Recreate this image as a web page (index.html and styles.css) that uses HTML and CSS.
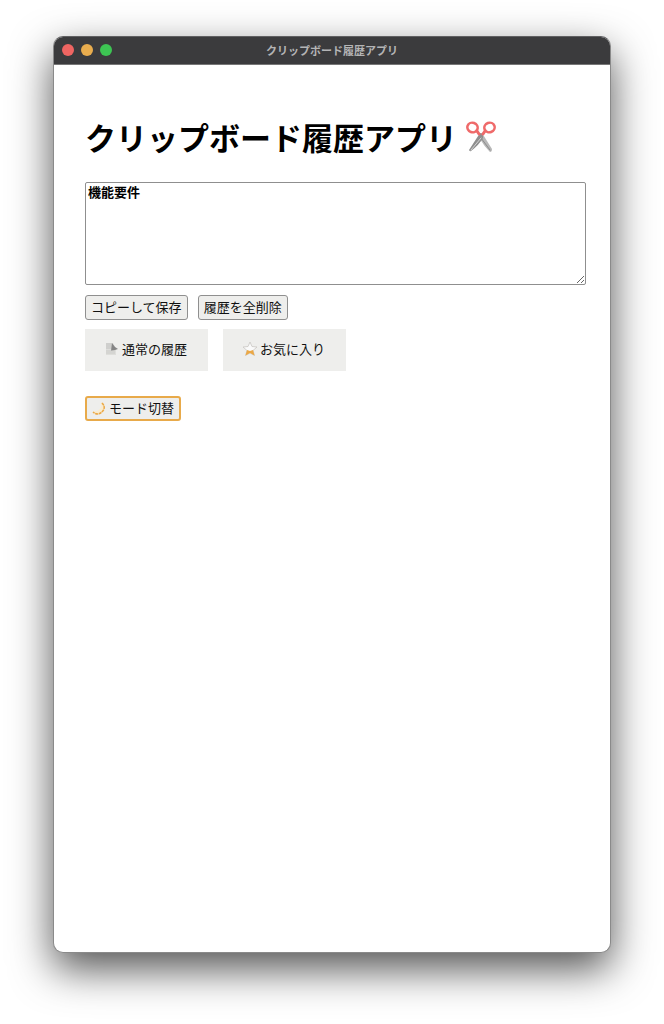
FILE: index.html
```html
<!DOCTYPE html>
<html lang="ja">
  <head>
    <meta charset="UTF-8" />
    <title>クリップボード履歴アプリ</title>
    <link rel="stylesheet" href="styles.css">
  </head>

  <body>
    <div class="window">
      <header class="titlebar">
        <div class="lights">
          <span class="light close"></span>
          <span class="light minimize"></span>
          <span class="light zoom"></span>
        </div>
        <span class="window-title">クリップボード履歴アプリ</span>
      </header>

      <main class="content">
        <h1>
          クリップボード履歴アプリ
          <svg class="scissors" viewBox="0 0 30 32" aria-hidden="true">
            <path d="M13 13 L16 12 L26 28 Q26 31 24 31 Q18 25 14 18Z" fill="#b8b8b8" />
            <path d="M24 29 L15 17" stroke="#8c8c8c" stroke-width="1" />
            <path d="M17 13 L14 12 L3 29 Q4 31 5 30 Q13 24 17 17Z" fill="#8f8f8f" />
            <path d="M5 29 L15 17" stroke="#d4d4d4" stroke-width="1" />
            <path d="M11 10 L13 13 M19 10 L17 13" stroke="#ef6a6a" stroke-width="3" />
            <ellipse cx="6.500" cy="6.500" rx="5.200" ry="4.800" transform="rotate(20 6.500 6.500)" />
            <ellipse cx="23.500" cy="6.500" rx="5.200" ry="4.800" transform="rotate(-20 23.500 6.500)" />
          </svg>
        </h1>

        <textarea id="clipboardInput" aria-label="コピーする内容">機能要件</textarea>

        <div class="actions">
          <button type="button" class="btn">コピーして保存</button>
          <button type="button" class="btn">履歴を全削除</button>
        </div>

        <div class="tabs">
          <button type="button" class="tab">
            <svg class="icon" viewBox="0 0 14 14" aria-hidden="true">
              <path d="M1 1h7l3 6v6H1z" fill="#dededb" />
              <path d="M1 1h6v6H1z" fill="#cfcfcd" />
              <path d="M7 1l3 4 3 2-3 1-4 1z" fill="#858585" />
              <path d="M1 9h9M1 11h9" stroke="#cbcbc8" />
            </svg>
            通常の履歴
          </button>
          <button type="button" class="tab">
            <svg class="icon" viewBox="0 0 14 14" aria-hidden="true">
              <path d="M7 0l2 4.500 5 .5-4 3.500 1.500 5L7 11l-4.500 2.500L4 8.500 0 5l5-.5z" fill="#fafafa" stroke="#c9c7c3" stroke-width=".8" />
              <path d="M4 8l3 1 3-1 1.500 5.500L7 11l-4.500 2.500z" fill="#eba845" />
            </svg>
            お気に入り
          </button>
        </div>

        <button type="button" class="btn mode">
          <svg class="icon" viewBox="0 0 14 14" aria-hidden="true">
            <path d="M9 1Q13 4 12 8 10 13 5 13 2 13 1 10 5 11 8 8 10 5 9 1z" fill="#faeccf" />
            <path d="M10 2Q13 5 12 8 10 12 6 13 3 13 1 11" fill="none" stroke="#eba845" stroke-width="1.500" stroke-dasharray="3 .6" />
          </svg>
          モード切替
        </button>
      </main>
    </div>
  </body>
</html>
```

FILE: styles.css
```css
* {
  box-sizing: border-box;
}

body {
  margin: 0;
  padding: 36px 53px 71px;
  background-color: #fff;
  font-family: "Noto Sans CJK JP", sans-serif;
}

.window {
  min-height: calc(100vh - 107px);
  border: 1px solid #8a8a8a;
  border-top-color: #606062;
  border-radius: 10px;
  background-color: #fff;
  box-shadow: 0 16px 42px rgba(0, 0, 0, 0.68);
  overflow: hidden;
}

.titlebar {
  display: grid;
  grid-template-columns: 1fr auto 1fr;
  align-items: center;
  height: 28px;
  padding: 0 8px 2px;
  border-bottom: 1px solid #777;
  background-color: #3b3b3d;
}

.lights {
  display: flex;
  gap: 7px;
}

.light {
  width: 12px;
  height: 12px;
  border-radius: 50%;
}

.close {
  background-color: #ef6562;
}

.minimize {
  background-color: #e9ad4e;
}

.zoom {
  background-color: #3dc453;
}

.window-title {
  color: #b4b4b5;
  font-size: 11px;
  font-weight: bold;
  line-height: 16px;
}

.content {
  padding: 48px 24px 30px 31px;
}

h1 {
  display: flex;
  align-items: center;
  gap: 9px;
  margin: 0 0 21px;
  font-size: 31px;
  line-height: 48px;
}

.scissors {
  width: 30px;
  height: 32px;
  fill: none;
  stroke: #ef6a6a;
  stroke-width: 2.5;
}

.scissors path {
  stroke-linecap: round;
}

.scissors path[fill] {
  stroke: none;
}

textarea {
  display: block;
  width: 100%;
  height: 103px;
  padding: 0 2px;
  border: 1px solid #8f8f8f;
  border-radius: 2px;
  font-family: inherit;
  font-size: 13px;
  font-weight: bold;
  line-height: 17px;
}

.actions {
  display: flex;
  gap: 10px;
  margin-top: 10px;
}

button {
  display: flex;
  align-items: center;
  justify-content: center;
  color: #111;
  background-color: #eeeeec;
  font-family: inherit;
  font-size: 13px;
  line-height: 18px;
  white-space: nowrap;
}

.btn {
  height: 25px;
  padding: 0 5px 2px;
  border: 1px solid #8f8f8f;
  border-radius: 3px;
}

.tabs {
  display: flex;
  gap: 15px;
  margin-top: 9px;
}

.tab {
  gap: 3px;
  height: 42px;
  padding: 0 21px 2px 20px;
  border: none;
}

.icon {
  width: 14px;
  height: 14px;
}

.mode {
  gap: 3px;
  margin-top: 25px;
  border: 2px solid #e8aa4a;
}
```
